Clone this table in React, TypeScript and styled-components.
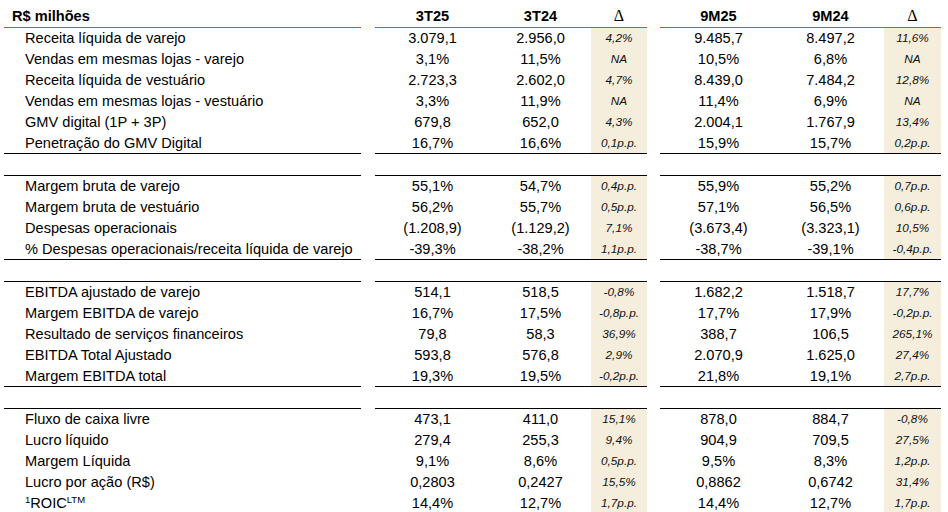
import React from "react";
import styled, { createGlobalStyle } from "styled-components";

const GlobalStyle = createGlobalStyle`
  body {
    margin: 0;
    background: #ffffff;
    font-family: "Liberation Sans", Arial, sans-serif;
    color: #000000;
  }
`;

const Sheet = styled.div`
  width: 948px;
  height: 512px;
  overflow: hidden;
  padding: 0 7px 0 4px;
  box-sizing: border-box;
`;

const Grid = styled.div`
  display: grid;
  grid-template-columns: 357px 14px 115px 101px 56px 13px 117px 107px 57px;
`;

const HeadCell = styled.div<{ $left?: boolean; $delta?: boolean; $gap?: boolean }>`
  height: 28px;
  display: flex;
  align-items: center;
  justify-content: ${(p) => (p.$left ? "flex-start" : "center")};
  padding-left: ${(p) => (p.$left ? "8px" : "0")};
  font-weight: ${(p) => (p.$delta ? "normal" : "bold")};
  font-family: ${(p) =>
    p.$delta ? '"Liberation Serif", "Times New Roman", serif' : "inherit"};
  font-size: ${(p) => (p.$delta ? "16px" : "14.6px")};
  border-bottom: ${(p) => (p.$gap ? "none" : "1.5px solid #c55a11")};
  padding-top: 5px;
  box-sizing: border-box;
`;

const Gap = styled.div``;

const Label = styled.div`
  height: 20.9px;
  display: flex;
  align-items: center;
  padding-left: 21px;
  font-size: 14.6px;
  white-space: nowrap;
`;

const Value = styled.div`
  height: 20.9px;
  display: flex;
  align-items: center;
  justify-content: center;
  font-size: 14.6px;
`;

const Delta = styled.div`
  height: 20.9px;
  display: flex;
  align-items: center;
  justify-content: center;
  font-size: 11.8px;
  font-style: italic;
  color: #111111;
  background: #f5eedc;
`;

const Rule = styled.div<{ $on?: boolean }>`
  height: 1px;
  background: ${(p) => (p.$on ? "#000000" : "transparent")};
`;

const Spacer = styled.div`
  height: 20.5px;
`;

const Sup = styled.sup`
  font-size: 9.5px;
  vertical-align: 5px;
  line-height: 0;
`;

type Row = [React.ReactNode, string, string, string, string, string, string];

const sections: Row[][] = [
  [
    ["Receita líquida de varejo", "3.079,1", "2.956,0", "4,2%", "9.485,7", "8.497,2", "11,6%"],
    ["Vendas em mesmas lojas - varejo", "3,1%", "11,5%", "NA", "10,5%", "6,8%", "NA"],
    ["Receita líquida de vestuário", "2.723,3", "2.602,0", "4,7%", "8.439,0", "7.484,2", "12,8%"],
    ["Vendas em mesmas lojas - vestuário", "3,3%", "11,9%", "NA", "11,4%", "6,9%", "NA"],
    ["GMV digital (1P + 3P)", "679,8", "652,0", "4,3%", "2.004,1", "1.767,9", "13,4%"],
    ["Penetração do GMV Digital", "16,7%", "16,6%", "0,1p.p.", "15,9%", "15,7%", "0,2p.p."],
  ],
  [
    ["Margem bruta de varejo", "55,1%", "54,7%", "0,4p.p.", "55,9%", "55,2%", "0,7p.p."],
    ["Margem bruta de vestuário", "56,2%", "55,7%", "0,5p.p.", "57,1%", "56,5%", "0,6p.p."],
    ["Despesas operacionais", "(1.208,9)", "(1.129,2)", "7,1%", "(3.673,4)", "(3.323,1)", "10,5%"],
    ["% Despesas operacionais/receita líquida de varejo", "-39,3%", "-38,2%", "1,1p.p.", "-38,7%", "-39,1%", "-0,4p.p."],
  ],
  [
    ["EBITDA ajustado de varejo", "514,1", "518,5", "-0,8%", "1.682,2", "1.518,7", "17,7%"],
    ["Margem EBITDA de varejo", "16,7%", "17,5%", "-0,8p.p.", "17,7%", "17,9%", "-0,2p.p."],
    ["Resultado de serviços financeiros", "79,8", "58,3", "36,9%", "388,7", "106,5", "265,1%"],
    ["EBITDA Total Ajustado", "593,8", "576,8", "2,9%", "2.070,9", "1.625,0", "27,4%"],
    ["Margem EBITDA total", "19,3%", "19,5%", "-0,2p.p.", "21,8%", "19,1%", "2,7p.p."],
  ],
  [
    ["Fluxo de caixa livre", "473,1", "411,0", "15,1%", "878,0", "884,7", "-0,8%"],
    ["Lucro líquido", "279,4", "255,3", "9,4%", "904,9", "709,5", "27,5%"],
    ["Margem Líquida", "9,1%", "8,6%", "0,5p.p.", "9,5%", "8,3%", "1,2p.p."],
    ["Lucro por ação (R$)", "0,2803", "0,2427", "15,5%", "0,8862", "0,6742", "31,4%"],
    [
      <span>
        <Sup>1</Sup>ROIC<Sup>LTM</Sup>
      </span>,
      "14,4%",
      "12,7%",
      "1,7p.p.",
      "14,4%",
      "12,7%",
      "1,7p.p.",
    ],
  ],
];

function RuleLine() {
  return (
    <>
      <Rule $on />
      <Gap />
      <Rule $on />
      <Rule $on />
      <Rule $on />
      <Gap />
      <Rule $on />
      <Rule $on />
      <Rule $on />
    </>
  );
}

function DataRow({ row }: { row: Row }) {
  const [label, a, b, d1, c, e, d2] = row;
  return (
    <>
      <Label>{label}</Label>
      <Gap />
      <Value>{a}</Value>
      <Value>{b}</Value>
      <Delta>{d1}</Delta>
      <Gap />
      <Value>{c}</Value>
      <Value>{e}</Value>
      <Delta>{d2}</Delta>
    </>
  );
}

export default function App() {
  return (
    <Sheet>
      <GlobalStyle />
      <Grid>
        <HeadCell $left>R$ milhões</HeadCell>
        <HeadCell $gap />
        <HeadCell>3T25</HeadCell>
        <HeadCell>3T24</HeadCell>
        <HeadCell $delta>Δ</HeadCell>
        <HeadCell $gap />
        <HeadCell>9M25</HeadCell>
        <HeadCell>9M24</HeadCell>
        <HeadCell $delta>Δ</HeadCell>
        {sections.map((rows, i) => (
          <React.Fragment key={i}>
            {i > 0 && (
              <>
                <RuleLine />
                {Array.from({ length: 9 }).map((_, k) => (
                  <Spacer key={k} />
                ))}
                <RuleLine />
              </>
            )}
            {rows.map((r, j) => (
              <DataRow key={j} row={r} />
            ))}
          </React.Fragment>
        ))}
      </Grid>
    </Sheet>
  );
}
